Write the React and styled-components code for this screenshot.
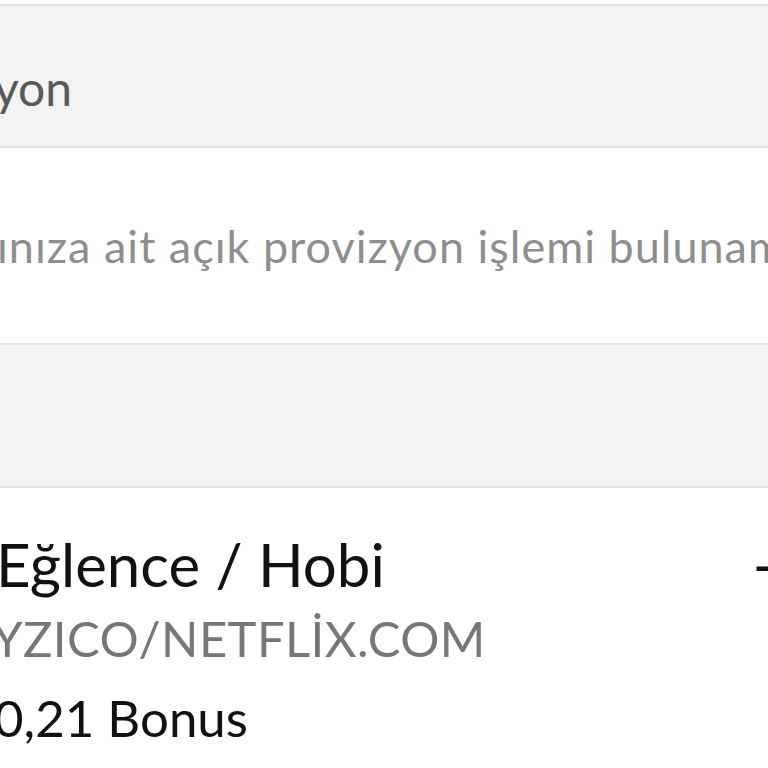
import React from "react";
import styled, { createGlobalStyle } from "styled-components";

const colors = {
  panel: "#f3f3f3",
  line: "#e3e3e3",
  ink: "#111111",
  muted: "#8e8e8e",
  soft: "#777777",
  heading: "#595959",
};

const GlobalStyle = createGlobalStyle`
  html, body {
    margin: 0;
    padding: 0;
    background: #ffffff;
    overflow: hidden;
  }
  body {
    font-family: "Lato", "Noto Sans", sans-serif;
  }
`;

const Screen = styled.div`
  width: 768px;
  height: 768px;
  overflow: hidden;
  display: flex;
  flex-direction: column;
  padding-top: 4px;
  box-sizing: border-box;
`;

const Band = styled.section`
  flex-shrink: 0;
  box-sizing: border-box;
  height: ${(p) => p.$height}px;
  padding-top: ${(p) => p.$padTop || 0}px;
  background: ${(p) => (p.$gray ? colors.panel : "#ffffff")};
  border-top: 2px solid ${colors.line};
  white-space: nowrap;
  overflow: hidden;
`;

const SectionTitle = styled.h2`
  margin: 0 0 0 -6px;
  font-size: 48px;
  font-weight: 400;
  line-height: 1;
  color: ${colors.heading};
`;

const Notice = styled.p`
  margin: 0 0 0 -3px;
  font-size: 45px;
  font-weight: 400;
  line-height: 1;
  letter-spacing: 1px;
  color: ${colors.muted};
`;

const TitleRow = styled.div`
  display: flex;
  justify-content: space-between;
  align-items: baseline;
`;

const Category = styled.h3`
  margin: 0 0 0 -4px;
  font-size: 60px;
  font-weight: 400;
  line-height: 1;
  color: ${colors.ink};
`;

const Amount = styled.span`
  font-size: 60px;
  line-height: 1;
  color: ${colors.ink};
  margin-right: -7px;
`;

const Merchant = styled.div`
  margin: 20px 0 0 -8px;
  font-size: 49px;
  line-height: 1;
  letter-spacing: 0.4px;
  color: ${colors.soft};
`;

const Bonus = styled.div`
  margin: 29px 0 0 -6px;
  font-size: 51px;
  line-height: 1;
  color: ${colors.ink};
`;

export default function App() {
  return (
    <>
      <GlobalStyle />
      <Screen>
        <Band $gray $height={142} $padTop={58}>
          <SectionTitle>yon</SectionTitle>
        </Band>
        <Band $height={197} $padTop={76}>
          <Notice>ınıza ait açık provizyon işlemi bulunamamaktadır.</Notice>
        </Band>
        <Band $gray $height={143} />
        <Band $height={282} $padTop={46}>
          <TitleRow>
            <Category>Eğlence / Hobi</Category>
            <Amount>-</Amount>
          </TitleRow>
          <Merchant>YZICO/NETFLİX.COM</Merchant>
          <Bonus>0,21 Bonus</Bonus>
        </Band>
      </Screen>
    </>
  );
}
